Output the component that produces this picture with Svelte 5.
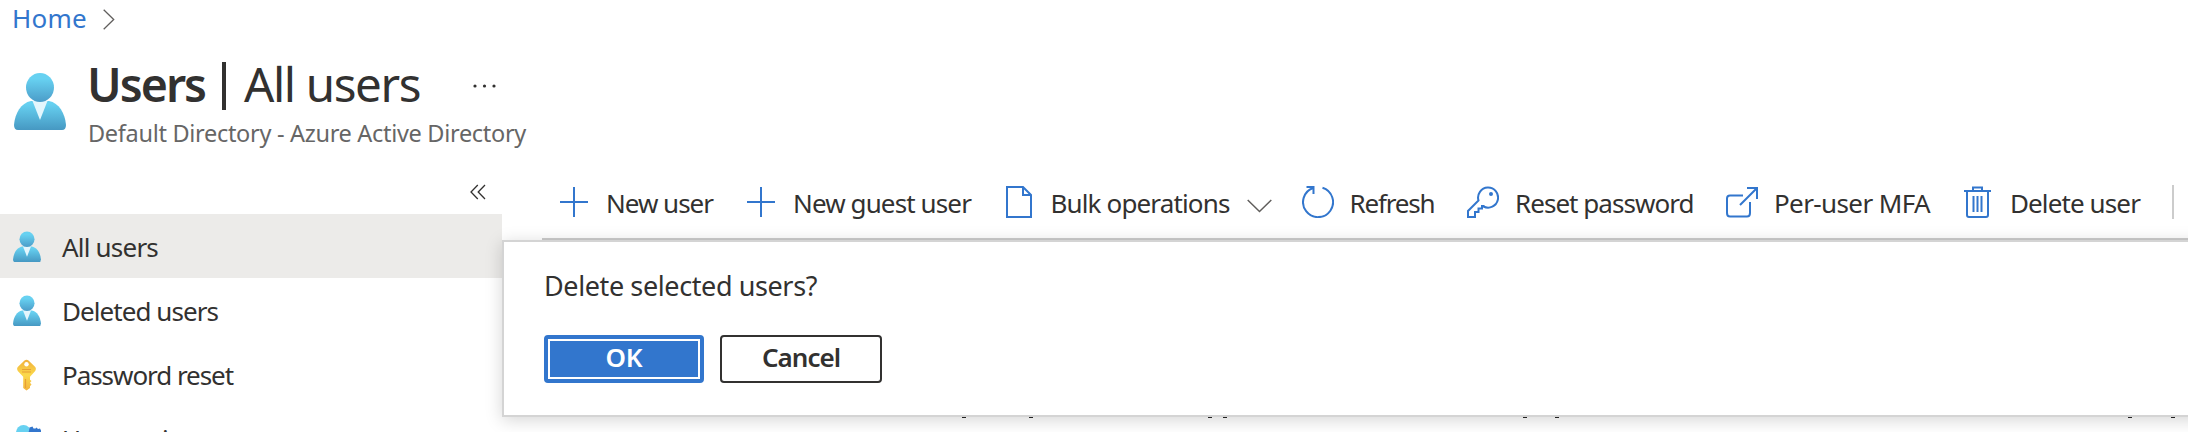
<script>
  // Spreads the letters of a label evenly over the given width.
  function fit(node, width) {
    const natural = node.getBoundingClientRect().width;
    node.style.letterSpacing = (width - natural) / node.textContent.length + 'px';
  }

  const commands = [
    { icon: 'plus', label: 'New user', gap: 16, width: 107, after: 32 },
    { icon: 'plus', label: 'New guest user', gap: 16, width: 178, after: 34 },
    { icon: 'doc', label: 'Bulk operations', gap: 17.5, width: 179, after: 12.5, menu: true },
    { icon: 'refresh', label: 'Refresh', gap: 16, width: 85, after: 32.5 },
    { icon: 'key', label: 'Reset password', gap: 16, width: 178.5, after: 32.5 },
    { icon: 'open', label: 'Per-user MFA', gap: 16, width: 156, after: 34 },
    { icon: 'trash', label: 'Delete user', gap: 19, width: 130, after: 32 }
  ];

  const nav = [
    { icon: 'user', label: 'All users', width: 96, selected: true },
    { icon: 'user', label: 'Deleted users', width: 156 },
    { icon: 'goldkey', label: 'Password reset', width: 171 },
    { icon: 'settings', label: 'User settings', width: 147 }
  ];
</script>

{#snippet person(size, id)}
  <svg class="person" width={size} height={size * 60 / 56} viewBox="0 0 56 60">
    <defs>
      <linearGradient id={'h' + id} x1="0" y1="0" x2="0" y2="1"><stop offset="0.2" stop-color="#67d1f1" /><stop offset="1" stop-color="#4b9cc8" /></linearGradient>
      <linearGradient id={'b' + id} x1="0" y1="0" x2="0" y2="1"><stop offset="0.1" stop-color="#67d1f1" /><stop offset="1" stop-color="#4698c2" /></linearGradient>
    </defs>
    <path d="M6 58Q2 58 2 53C3 41 9 31 19 29h18c10 2 16 12 17 24q0 5-4 5z" fill={`url(#b${id})`} />
    <path d="M20.500 29h15L28 48z" fill="#e4f6fd" />
    <ellipse cx="28" cy="15.500" rx="14" ry="14.500" fill={`url(#h${id})`} />
  </svg>
{/snippet}

<div class="page">
  <nav class="crumbs">
    <a href="#home"><span use:fit={75}>Home</span></a>
    <svg width="12" height="21" viewBox="0 0 12 21"><path d="M.7.7l10 9.800-10 9.800" fill="none" stroke="#605e5c" stroke-width="1.300" /></svg>
  </nav>

  <header>
    {@render person(56, 'big')}
    <div class="heading">
      <div class="titleline">
        <h1><b><span use:fit={118}>Users</span></b><i></i><span class="blade"><span use:fit={176}>All users</span></span></h1>
        <svg class="dots" width="24" height="4" viewBox="0 0 24 4" fill="#323130"><circle cx="2" cy="2" r="1.600" /><circle cx="11.500" cy="2" r="1.600" /><circle cx="21" cy="2" r="1.600" /></svg>
      </div>
      <p><span use:fit={438}>Default Directory - Azure Active Directory</span></p>
    </div>
  </header>

  <div class="body">
    <aside>
      <div class="collapse">
        <svg width="16" height="16" viewBox="0 0 16 16" fill="none" stroke="#323130" stroke-width="1.300"><path d="M7.800 1L1 8l6.800 7M15 1L8.200 8l6.800 7" /></svg>
      </div>
      <ul>
        {#each nav as item, n}
          <li class:selected={item.selected}>
            <span class="navicon">
              {#if item.icon === 'user'}
                {@render person(30, n)}
              {:else if item.icon === 'goldkey'}
                <svg width="30" height="32" viewBox="0 0 30 32">
                  <defs><linearGradient id="gold" x1="0" y1="0" x2="0" y2="1"><stop offset="0" stop-color="#f0b03c" /><stop offset=".5" stop-color="#fbd94c" /><stop offset="1" stop-color="#f2b43f" /></linearGradient></defs>
                  <path d="M12.500 1.500q2-1.500 4 0L23 7.800q1.800 2 0 4.400L18 17.700v3l1.500 1.300-1.500 1.800 1.500 1.700-1.500 1.800V29l-3.500 2.500L11.200 29V17.700L6 12.200q-1.800-2.400 0-4.400z" fill="url(#gold)" />
                  <circle cx="14.500" cy="5.300" r="2.200" fill="#fff" />
                  <path d="M10 10.500h9M10 13h9M13.500 20v9" stroke="#e8a035" stroke-width="1.200" />
                </svg>
              {:else}
                <svg width="30" height="32" viewBox="0 0 30 32">
                  <circle cx="11.500" cy="9.500" r="7.500" fill="#67d1f1" />
                  <path d="M1 31c1-9 5-14 11-14s10 5 11 14z" fill="#56b8de" />
                  <path d="M17.500 4.500l3-1 1 2h2l1-1 1.500 1.500 2-.5 1 2V12H15l2-4z" fill="#3276cd" />
                </svg>
              {/if}
            </span>
            <span use:fit={item.width}>{item.label}</span>
          </li>
        {/each}
      </ul>
    </aside>

    <main>
      <div class="toolbar">
        {#each commands as c}
          <div class="command" style:gap={c.gap + 'px'} style:margin-right={c.after + 'px'}>
            {#if c.icon === 'plus'}
              <svg width="32" height="32" viewBox="0 0 32 32"><path d="M16 1v30M2 16h28" /></svg>
            {:else if c.icon === 'doc'}
              <svg width="28" height="32" viewBox="0 0 28 32"><path d="M2 1h16l8 8v22H2zM18 1v8h8" /></svg>
            {:else if c.icon === 'refresh'}
              <svg width="32" height="32" viewBox="0 0 32 32"><path d="M20.500 1.800A15 15 0 1 1 11 2M4.500 1H11.500v7" /></svg>
            {:else if c.icon === 'key'}
              <svg width="32" height="32" viewBox="0 0 32 32"><path d="M11.500 14.500A10 10 0 1 1 16.500 20.500V20H15v2.500h-3.500V26H8v5H1v-6z" /><circle cx="24" cy="8" r="1" /></svg>
            {:else if c.icon === 'open'}
              <svg width="32" height="32" viewBox="0 0 32 32"><path d="M17 9.500H4q-3 0-3 3V27q0 3.500 3 3.500h17q3 0 3-3.500V16M21 2h10v11M31 2L14 19" /></svg>
            {:else}
              <svg width="27" height="32" viewBox="0 0 27 32"><path d="M0 5h27M9 5V1.500h9V5M3 5v24q0 2 2 2h17q2 0 2-2V5M9.500 10v16M13.500 10v16M17.500 10v16" /></svg>
            {/if}
            <span class="label" use:fit={c.width}>{c.label}</span>
            {#if c.menu}
              <svg class="menu" width="25" height="14" viewBox="0 0 25 14"><path d="M.7 1l11.800 11.500L24.300 1" /></svg>
            {/if}
          </div>
        {/each}
        <div class="separator"></div>
      </div>

      <div class="remnants">
        <i style:left="962px"></i><i style:left="1029px"></i><i style:left="1208px"></i><i style:left="1223px"></i><i style:left="1523px"></i><i style:left="1555px"></i><i style:left="2128px"></i><i style:left="2171px"></i>
      </div>

      <section class="dialog">
        <h2><span use:fit={273}>Delete selected users?</span></h2>
        <div class="actions">
          <button class="ok"><span use:fit={37}>OK</span></button>
          <button class="cancel"><span use:fit={78}>Cancel</span></button>
        </div>
      </section>
    </main>
  </div>
</div>

<style>
  :global(body) { background: #fff; }
  .page {
    position: relative;
    width: 2188px;
    height: 432px;
    overflow: hidden;
    background: #fff;
    color: #323130;
    font: 26px/36px "Noto Sans", "Open Sans", sans-serif;
    white-space: nowrap;
  }
  svg { display: block; flex: none; }
  .crumbs { display: flex; align-items: center; height: 38px; padding-left: 12px; }
  .crumbs a { width: 91px; margin-top: -2px; color: #3276cd; text-decoration: none; }
  header { display: flex; height: 138px; }
  header > .person { margin: 34px 20px 0 12px; }
  .titleline { display: flex; align-items: center; height: 77px; padding-top: 15px; box-sizing: border-box; }
  h1 { display: flex; align-items: center; margin: 0; font-size: 47.500px; line-height: 64px; font-weight: 400; }
  h1 b { width: 134px; margin-left: -1px; font-weight: 600; font-size: 46.500px; }
  h1 i { width: 4px; height: 48px; margin: 4px 18px 0 1px; background: #323130; }
  .blade { width: 229px; }
  .dots { margin-top: 3px; }
  p { margin: 0; font-size: 23.500px; line-height: 36px; color: #666; }
  .body { display: flex; height: 256px; }
  aside { width: 502px; flex: none; }
  .collapse { display: flex; justify-content: flex-end; padding: 8px 16px 14px 0; }
  ul { margin: 0; padding: 0; list-style: none; }
  li { display: flex; align-items: center; height: 64px; padding: 2px 0 0 12px; box-sizing: border-box; }
  li.selected { background: #ecebe9; }
  .navicon { width: 50px; }
  main { flex: 1; min-width: 0; }
  .toolbar { display: flex; align-items: center; height: 64px; margin-left: 40px; padding: 0 0 10px 16px; box-sizing: border-box; border-bottom: 2px solid #ccc; }
  .command { display: flex; align-items: center; flex: none; }
  .command svg { fill: none; stroke: #3276cd; stroke-width: 2; }
  .command svg.menu { stroke: #605e5c; stroke-width: 1.500; margin-top: 8px; margin-right: 17px; }
  .label { padding-top: 1px; }
  .separator { width: 2px; height: 34px; background: #ccc; flex: none; }
  .dialog { position: relative; width: 1720px; height: 177px; padding: 25px 40px 0; box-sizing: border-box; border: 2px solid #d4d4d4; background: #fff; box-shadow: 0 3px 16px rgba(0, 0, 0, .17); }
  h2 { margin: 0; font-size: 27px; line-height: 38px; font-weight: 400; }
  .actions { display: flex; gap: 16px; margin-top: 30px; }
  button { height: 48px; box-sizing: border-box; border-radius: 4px; padding: 0 0 5px; font: 600 26px/36px "Noto Sans", "Open Sans", sans-serif; }
  .ok { width: 160px; border: 4px solid #3276cd; background: #3276cd; color: #fff; box-shadow: inset 0 0 0 2px #fff; }
  .cancel { width: 162px; border: 2px solid #323130; background: #fff; color: #323130; }
  .remnants i { position: absolute; z-index: 1; top: 417px; width: 4px; height: 1px; background: #222; }
</style>
